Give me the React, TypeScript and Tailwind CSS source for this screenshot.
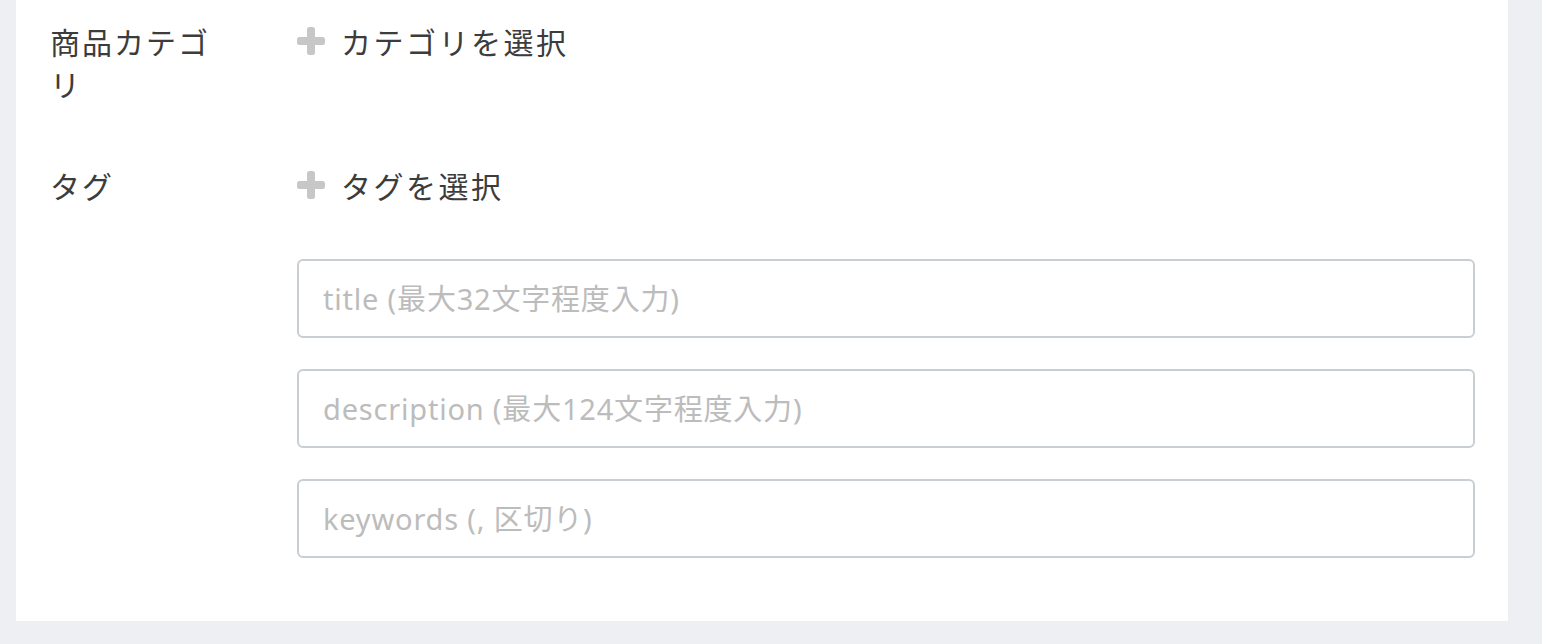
import React from "react";

const font = { fontFamily: '"Noto Sans CJK JP", "Noto Sans", sans-serif' };
const inputFont = { fontFamily: '"Noto Sans", "Noto Sans CJK JP", sans-serif' };

function PlusIcon() {
  return (
    <svg width="28" height="28" viewBox="0 0 28 28" className="shrink-0">
      <rect x="10" y="0" width="8" height="28" rx="2.5" fill="#c7c7c7" />
      <rect x="0" y="10" width="28" height="8" rx="2.5" fill="#c7c7c7" />
    </svg>
  );
}

function SelectButton({ label }: { label: string }) {
  return (
    <button type="button" className="flex items-center gap-[16px] h-[42px] text-[30px] leading-[42px] tracking-[2.5px] text-[#3c3c3c]">
      <PlusIcon />
      <span>{label}</span>
    </button>
  );
}

function Field({ placeholder }: { placeholder: string }) {
  return (
    <input
      type="text"
      placeholder={placeholder}
      className="w-full h-[79px] rounded-[6px] border-2 border-[#c9ced2] bg-white px-[24px] text-[29px] tracking-[0.8px] text-[#333] placeholder:text-[#bcbcbc] outline-none"
      style={inputFont}
    />
  );
}

export default function App() {
  return (
    <div className="min-h-[644px] bg-[#eeeff3] pl-[16px] pr-[34px]" style={font}>
      <div className="bg-white pl-[34px] pr-[33px] pt-[20px] pb-[63px]">
        <div className="flex">
          <div className="w-[247px] shrink-0 pr-[60px] text-[30px] leading-[42px] tracking-[2px] text-[#3c3c3c]">
            商品カテゴリ
          </div>
          <div className="flex-1">
            <SelectButton label="カテゴリを選択" />
          </div>
        </div>
        <div className="flex mt-[60px]">
          <div className="w-[247px] shrink-0 pr-[60px] text-[30px] leading-[42px] tracking-[2px] text-[#3c3c3c]">
            タグ
          </div>
          <div className="flex-1">
            <SelectButton label="タグを選択" />
            <div className="mt-[53px] flex flex-col gap-[31px]">
              <Field placeholder="title (最大32文字程度入力)" />
              <Field placeholder="description (最大124文字程度入力)" />
              <Field placeholder="keywords (, 区切り)" />
            </div>
          </div>
        </div>
      </div>
    </div>
  );
}
